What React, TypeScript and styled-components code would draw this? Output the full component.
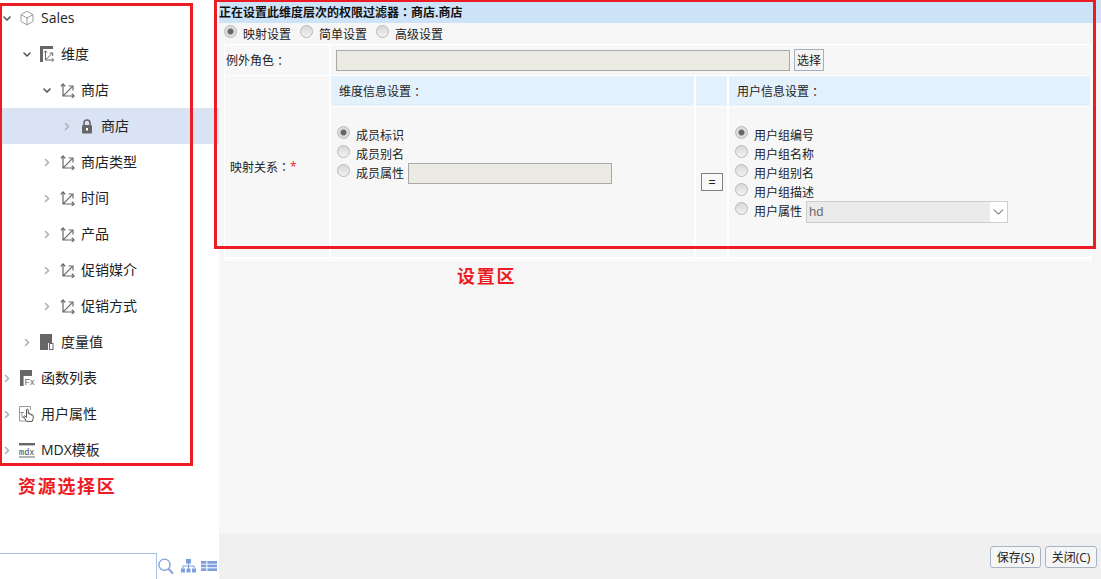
import React from "react";
import styled, { createGlobalStyle } from "styled-components";
import { Box, ChevronDown, ChevronRight } from "lucide-react";

const Global = createGlobalStyle`
  html, body { margin: 0; padding: 0; background: #fff; overflow: hidden; }
  * { box-sizing: border-box; }
  body { font-family: "Open Sans", "Noto Sans CJK SC", sans-serif; color: #222; }
`;

const Page = styled.div`
  position: relative;
  display: flex;
  width: 1101px;
  height: 579px;
  overflow: hidden;
`;

const Sidebar = styled.aside`
  width: 219px;
  display: flex;
  flex-direction: column;
  background: #fff;
`;

const Tree = styled.ul`
  flex: 1;
  list-style: none;
  margin: 0;
  padding: 0;
`;

const TreeRow = styled.li<{ $level: number; $selected?: boolean }>`
  height: 36px;
  display: flex;
  align-items: center;
  padding-left: ${(p) => p.$level * 20 + 1}px;
  background: ${(p) => (p.$selected ? "#d9e3f3" : "transparent")};
`;

const Toggle = styled.span<{ $open?: boolean }>`
  width: 12px;
  height: 16px;
  display: flex;
  align-items: center;
  justify-content: center;
  color: ${(p) => (p.$open ? "#555" : "#b0b0b0")};
`;

const NodeIcon = styled.span`
  width: 16px;
  height: 18px;
  margin-left: 6px;
  display: flex;
  align-items: center;
  justify-content: center;
`;

const NodeLabel = styled.span`
  margin-left: 6px;
  font-size: 14px;
  line-height: 20px;
  white-space: nowrap;
  color: #222;
`;

const SearchBar = styled.div`
  height: 26px;
  display: flex;
  align-items: center;
`;

const SearchBox = styled.input`
  width: 157px;
  height: 26px;
  padding: 0;
  border: 0;
  border-top: 1px solid #a9c0e8;
  border-right: 1px solid #a9c0e8;
  background: #fff;
  outline: none;
`;

const SearchTools = styled.div`
  display: flex;
  align-items: center;
  padding-left: 1px;
  svg:first-child { margin-right: 7px; }
  svg:last-child { margin-left: 5px; }
`;

const Main = styled.main`
  flex: 1;
  display: flex;
  flex-direction: column;
  background: #f6f6f6;
  font-size: 12px;
`;

const Content = styled.div`
  flex: 1;
`;

const TitleBar = styled.div`
  height: 23px;
  padding: 3px 0 0 0;
  background: #cde3f8;
  font-size: 12px;
  font-weight: 700;
  line-height: 18px;
  color: #111;
  white-space: nowrap;
`;

const Colon = styled.span`
  font-family: "Noto Sans CJK TC", sans-serif;
`;

const ModeRow = styled.div`
  height: 21px;
  display: flex;
  padding-left: 5px;
`;

const ModeOption = styled.label`
  width: 76px;
  display: flex;
  align-items: flex-start;
  padding-top: 2px;
  line-height: 18px;
`;

const ModeText = styled.span`
  margin-top: 1px;
`;

const RadioInput = styled.input.attrs({ type: "radio" })`
  appearance: none;
  flex: none;
  width: 13px;
  height: 13px;
  margin: 0 6px 0 0;
  border: 1px solid #b9b9b9;
  border-radius: 50%;
  background: linear-gradient(#d8d8d8, #f2f2f2);
  &:checked {
    background: radial-gradient(circle, #666 0 2.6px, #dcdcdc 3.4px);
  }
`;

const TableWrap = styled.div`
  width: 868px;
  height: 217px;
  margin-left: 5px;
  border: 1px solid #fff;
`;

const Grid = styled.div`
  display: grid;
  grid-template-columns: 104px 363px 31px 361px;
  grid-template-rows: 30px 30px 150px;
  gap: 1px 2px;
  background: #fff;
  padding-bottom: 2px;
  height: 214px;
`;

const Cell = styled.div`
  background: #f7f7f7;
  min-width: 0;
`;

const RoleLabel = styled(Cell)`
  display: flex;
  align-items: center;
  padding-left: 1px;
`;

const RoleField = styled(Cell)`
  grid-column: 2 / 5;
  display: flex;
  align-items: center;
  padding: 0 0 0 5px;
`;

const MapLabel = styled(Cell)`
  grid-row: 2 / 4;
  display: flex;
  align-items: center;
  padding: 0 0 0 5px;
`;

const Required = styled.span`
  color: #e8202a;
`;

const HeaderCell = styled(Cell)`
  display: flex;
  align-items: center;
  padding-left: 8px;
  background: #e3f1fd;
`;

const OptionCell = styled(Cell)`
  display: flex;
  flex-direction: column;
  padding: 18px 0 0 6px;
`;

const EqualCell = styled(Cell)`
  padding: 66px 0 0 5px;
`;

const OptionRow = styled.label`
  height: 19px;
  display: flex;
  align-items: flex-start;
  padding-top: 1px;
  line-height: 20px;
  white-space: nowrap;
`;

const OptionText = styled.span`
  margin-top: 0;
`;

const DisabledInput = styled.input<{ $width: number }>`
  width: ${(p) => p.$width}px;
  height: 21px;
  padding: 0;
  border: 1px solid #a9a9a9;
  background: #ebebe4;
  outline: none;
`;

const AttrInput = styled(DisabledInput)`
  margin: -1px 0 0 4px;
`;

const PickButton = styled.button`
  width: 30px;
  height: 22px;
  margin-left: 4px;
  padding: 0;
  border: 1px solid #a3afbd;
  background: #f4f4f4;
  font: inherit;
  color: #222;
`;

const EqualButton = styled.button`
  display: block;
  width: 22px;
  height: 18px;
  padding: 0;
  border: 1px solid #808080;
  background: #f8f8f8;
  font: 12px "Liberation Sans", sans-serif;
  color: #222;
`;

const FakeSelect = styled.div`
  width: 202px;
  height: 22px;
  margin: -1px 0 0 4px;
  display: flex;
  align-items: stretch;
  border: 1px solid #cdcdcd;
  background: #fff;
`;

const SelectValue = styled.span`
  flex: 1;
  padding-left: 2px;
  background: #ebebeb;
  font: 13px/20px "Liberation Sans", sans-serif;
  color: #6d6d6d;
`;

const SelectArrow = styled.span`
  width: 17px;
  display: flex;
  align-items: center;
  justify-content: center;
  color: #333;
`;

const Footer = styled.footer`
  height: 45px;
  display: flex;
  justify-content: flex-end;
  gap: 4px;
  padding: 12px 4px 0 0;
  background: #f0f0f0;
`;

const FooterButton = styled.button<{ $width: number }>`
  width: ${(p) => p.$width}px;
  height: 22px;
  padding: 0;
  border: 1px solid #a8b4c4;
  border-radius: 3px;
  background: #f6f6f6;
  font: inherit;
  font-size: 12px;
  color: #222;
`;

const RedFrame = styled.div<{ $x: number; $y: number; $w: number; $h: number }>`
  position: absolute;
  left: ${(p) => p.$x}px;
  top: ${(p) => p.$y}px;
  width: ${(p) => p.$w}px;
  height: ${(p) => p.$h}px;
  border: 3px solid #ed1c24;
  pointer-events: none;
`;

const RedNote = styled.div<{ $x: number; $y: number }>`
  position: absolute;
  left: ${(p) => p.$x}px;
  top: ${(p) => p.$y}px;
  font-family: "Noto Sans CJK SC", sans-serif;
  font-size: 18px;
  font-weight: 700;
  line-height: 22px;
  letter-spacing: 1.7px;
  color: #ed1c24;
  white-space: nowrap;
`;

const G = "#666";
const B = "#7f9fdc";

const AxisGlyph = () => (
  <svg width="15" height="15" viewBox="0 0 15 15" fill="none" stroke={G} strokeWidth="1.2">
    <path d="M3 1V13H14M3.4 12.6L12.6 3.4" />
    <path d="M0.8 3.4L3 1L5.2 3.4M11.8 10.8L14.2 13L11.8 15M8.6 3H13V7.4" />
  </svg>
);

const DimensionGlyph = () => (
  <svg width="14" height="16" viewBox="0 0 14 16" fill="none">
    <path d="M0 0H13V3H3V16H0Z" fill={G} />
    <path d="M5.5 5V14H13.5M5.8 13.7L12.5 7" stroke={G} strokeWidth="1" />
    <path d="M4 6.5L5.5 4.8L7 6.5M11.8 12.4L13.6 14L11.8 15.6M9.6 7H12.7V10" stroke={G} strokeWidth="1" />
  </svg>
);

const MeasureGlyph = () => (
  <svg width="14" height="16" viewBox="0 0 14 16">
    <path d="M0 0H12V9H8V16H0Z" fill={G} />
    <rect x="9.5" y="9.5" width="3.5" height="6" fill="#fff" stroke={G} />
  </svg>
);

const FunctionGlyph = () => (
  <svg width="15" height="16" viewBox="0 0 15 16">
    <path d="M0 0H12V6H3.6V16H0Z" fill={G} />
    <text x="4.6" y="15.4" fontFamily="Liberation Sans" fontSize="9" fill={G}>Fx</text>
  </svg>
);

const UserAttrGlyph = () => (
  <svg width="16" height="16" viewBox="0 0 16 16" fill="none">
    <path d="M7 15H0.5V0.5H11.5V4M0.5 6.5H5M3 6.5V11.5H6" stroke="#999" strokeWidth="1" />
    <path
      d="M7.5 15.4L4.6 10.6L5.8 9.8L7.5 11.4V4C7.5 2.8 9.3 2.8 9.3 4V7.8C9.3 6.8 11 6.8 11 7.8V8.6C11 7.7 12.6 7.7 12.6 8.7V9.4C12.6 8.6 14.2 8.6 14.2 9.6V12.6L13.2 15.4Z"
      fill="#fff"
      stroke="#555"
      strokeWidth="1"
    />
  </svg>
);

const MdxGlyph = () => (
  <svg width="16" height="15" viewBox="0 0 16 15">
    <rect x="0" y="0" width="16" height="2.4" fill={G} />
    <text x="0" y="11.5" fontFamily="Liberation Mono" fontSize="8.6" fill="#444">mdx</text>
    <rect x="0" y="13.5" width="16" height="1" fill={G} />
  </svg>
);

const LockGlyph = () => (
  <svg width="12" height="15" viewBox="0 0 12 15">
    <path d="M3 6V4a3 3 0 0 1 6 0v2" fill="none" stroke={G} strokeWidth="1.6" />
    <rect x="1" y="6" width="10" height="8.5" rx="1" fill={G} />
    <rect x="5" y="9" width="2" height="2.5" fill="#fff" />
  </svg>
);

const SearchGlyph = () => (
  <svg width="16" height="17" viewBox="0 0 16 17" fill="none" stroke={B}>
    <circle cx="6.5" cy="6.8" r="5.6" strokeWidth="1.3" />
    <path d="M10.6 11L15 15.6" strokeWidth="2" />
  </svg>
);

const OrgGlyph = () => (
  <svg width="15" height="14" viewBox="0 0 15 14" fill={B}>
    <rect x="5" y="0" width="5" height="4.5" />
    <rect x="0" y="9.5" width="4" height="4" />
    <rect x="5.5" y="9.5" width="4" height="4" />
    <rect x="11" y="9.5" width="4" height="4" />
    <path d="M7 4H8V6.5H13.5V9.5H12.5V7.5H8V9.5H7V7.5H2.5V9.5H1.5V6.5H7Z" />
  </svg>
);

const ListGlyph = () => (
  <svg width="16" height="10" viewBox="0 0 16 10" fill={B}>
    <rect x="0" y="0" width="5.4" height="2.7" />
    <rect x="6.4" y="0" width="9.6" height="2.7" />
    <rect x="0" y="3.6" width="5.4" height="2.7" />
    <rect x="6.4" y="3.6" width="9.6" height="2.7" />
    <rect x="0" y="7.3" width="5.4" height="2.7" />
    <rect x="6.4" y="7.3" width="9.6" height="2.7" />
  </svg>
);

type Node = { level: number; label: string; open?: boolean; selected?: boolean; icon: React.ReactNode };

const nodes: Node[] = [
  { level: 0, label: "Sales", open: true, icon: <Box size={18} strokeWidth={1.1} color="#777" /> },
  { level: 1, label: "维度", open: true, icon: <DimensionGlyph /> },
  { level: 2, label: "商店", open: true, icon: <AxisGlyph /> },
  { level: 3, label: "商店", selected: true, icon: <LockGlyph /> },
  { level: 2, label: "商店类型", icon: <AxisGlyph /> },
  { level: 2, label: "时间", icon: <AxisGlyph /> },
  { level: 2, label: "产品", icon: <AxisGlyph /> },
  { level: 2, label: "促销媒介", icon: <AxisGlyph /> },
  { level: 2, label: "促销方式", icon: <AxisGlyph /> },
  { level: 1, label: "度量值", icon: <MeasureGlyph /> },
  { level: 0, label: "函数列表", icon: <FunctionGlyph /> },
  { level: 0, label: "用户属性", icon: <UserAttrGlyph /> },
  { level: 0, label: "MDX模板", icon: <MdxGlyph /> },
];

const dimensionOptions = ["成员标识", "成员别名"];
const userOptions = ["用户组编号", "用户组名称", "用户组别名", "用户组描述"];

export default function App() {
  return (
    <Page>
      <Global />
      <Sidebar>
        <Tree>
          {nodes.map((n, i) => (
            <TreeRow key={i} $level={n.level} $selected={n.selected}>
              <Toggle $open={n.open}>
                {n.open ? <ChevronDown size={15} strokeWidth={3.2} /> : <ChevronRight size={15} strokeWidth={3.2} />}
              </Toggle>
              <NodeIcon>{n.icon}</NodeIcon>
              <NodeLabel>{n.label}</NodeLabel>
            </TreeRow>
          ))}
        </Tree>
        <SearchBar>
          <SearchBox aria-label="search" />
          <SearchTools>
            <SearchGlyph />
            <OrgGlyph />
            <ListGlyph />
          </SearchTools>
        </SearchBar>
      </Sidebar>

      <Main>
        <Content>
          <TitleBar>正在设置此维度层次的权限过滤器<Colon>：</Colon>商店.商店</TitleBar>
          <ModeRow>
            <ModeOption>
              <RadioInput name="mode" defaultChecked />
              <ModeText>映射设置</ModeText>
            </ModeOption>
            <ModeOption>
              <RadioInput name="mode" />
              <ModeText>简单设置</ModeText>
            </ModeOption>
            <ModeOption>
              <RadioInput name="mode" />
              <ModeText>高级设置</ModeText>
            </ModeOption>
          </ModeRow>
          <TableWrap>
            <Grid>
              <RoleLabel>例外角色<Colon>：</Colon></RoleLabel>
              <RoleField>
                <DisabledInput $width={454} disabled />
                <PickButton>选择</PickButton>
              </RoleField>
              <MapLabel>
                映射关系<Colon>：</Colon><Required>*</Required>
              </MapLabel>
              <HeaderCell>维度信息设置<Colon>：</Colon></HeaderCell>
              <HeaderCell />
              <HeaderCell>用户信息设置<Colon>：</Colon></HeaderCell>
              <OptionCell>
                {dimensionOptions.map((o, i) => (
                  <OptionRow key={o}>
                    <RadioInput name="dim" defaultChecked={i === 0} />
                    <OptionText>{o}</OptionText>
                  </OptionRow>
                ))}
                <OptionRow>
                  <RadioInput name="dim" />
                  <OptionText>成员属性</OptionText>
                  <AttrInput $width={204} disabled />
                </OptionRow>
              </OptionCell>
              <EqualCell>
                <EqualButton>=</EqualButton>
              </EqualCell>
              <OptionCell>
                {userOptions.map((o, i) => (
                  <OptionRow key={o}>
                    <RadioInput name="user" defaultChecked={i === 0} />
                    <OptionText>{o}</OptionText>
                  </OptionRow>
                ))}
                <OptionRow>
                  <RadioInput name="user" />
                  <OptionText>用户属性</OptionText>
                  <FakeSelect>
                    <SelectValue>hd</SelectValue>
                    <SelectArrow>
                      <ChevronDown size={20} strokeWidth={1.3} />
                    </SelectArrow>
                  </FakeSelect>
                </OptionRow>
              </OptionCell>
            </Grid>
          </TableWrap>
        </Content>
        <Footer>
          <FooterButton $width={51}>保存(S)</FooterButton>
          <FooterButton $width={52}>关闭(C)</FooterButton>
        </Footer>
      </Main>

      <RedFrame $x={-1} $y={3} $w={194} $h={463} />
      <RedFrame $x={214} $y={-1} $w={882} $h={250} />
      <RedNote $x={18} $y={474}>资源选择区</RedNote>
      <RedNote $x={457} $y={264}>设置区</RedNote>
    </Page>
  );
}
